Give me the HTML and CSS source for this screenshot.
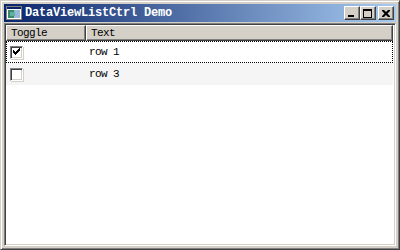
FILE: index.html
```html
<!DOCTYPE html>
<html lang="en">
<head>
  <meta charset="UTF-8">
  <title>DataViewListCtrl Demo</title>
  <link rel="stylesheet" href="styles.css">
</head>
<body>

  <!-- Frame -->
  <div class="window">
    <div class="titlebar">
      <div class="app-icon">
        <svg width="16" height="14" viewBox="0 0 16 14">
          <rect x="0.5" y="0.5" width="15" height="13" fill="#fff" stroke="#808080"/>
          <rect x="1" y="1" width="14" height="2" fill="#0a246a"/>
          <rect x="2" y="4" width="6" height="8" fill="#3a8a6a"/>
          <rect x="8" y="4" width="6" height="8" fill="#9ab8d8"/>
          <rect x="4" y="6" width="5" height="4" fill="#60b0a0"/>
        </svg>
      </div>
      <div class="title">DataViewListCtrl Demo</div>
      <div class="caption-buttons">
        <div class="cap-btn"><span class="min-glyph"></span></div>
        <div class="cap-btn"><span class="max-glyph"></span></div>
        <div class="cap-btn close">
          <svg width="8" height="7" viewBox="0 0 8 7">
            <path d="M0 0h2l2 2 2-2h2v1l-2.5 2.5L8 6v1H6L4 5 2 7H0V6l2.5-2.5L0 1z" fill="#000"/>
          </svg>
        </div>
      </div>
    </div>

    <!-- List control -->
    <div class="listctrl">
      <div class="header">
        <div class="col col-toggle">Toggle</div>
        <div class="col col-text">Text</div>
      </div>
      <div class="row focused">
        <div class="cell cell-toggle"><span class="check checked"></span></div>
        <div class="cell cell-text">row 1</div>
      </div>
      <div class="row alt">
        <div class="cell cell-toggle"><span class="check"></span></div>
        <div class="cell cell-text">row 3</div>
      </div>
    </div>
  </div>

</body>
</html>
```

FILE: styles.css
```css
* {
  margin: 0;
  padding: 0;
  box-sizing: border-box;
}

body {
  width: 400px;
  height: 250px;
  overflow: hidden;
  background-color: #d4d0c8;
  font-family: "Liberation Mono", "DejaVu Sans Mono", monospace;
}

/* Window frame */
.window {
  width: 400px;
  height: 250px;
  background-color: #d4d0c8;
  border-top: 1px solid #d4d0c8;
  border-left: 1px solid #d4d0c8;
  border-right: 1px solid #404040;
  border-bottom: 1px solid #404040;
  box-shadow: inset 1px 1px 0 #fff, inset -1px -1px 0 #808080;
  padding: 3px;
  display: flex;
  flex-direction: column;
}

/* Title bar */
.titlebar {
  height: 18px;
  display: flex;
  align-items: center;
  background: linear-gradient(to right, #0a246a, #a6caf0);
  padding: 0 2px;
  flex-shrink: 0;
}

.app-icon {
  width: 16px;
  height: 14px;
  margin-right: 3px;
  display: flex;
}

.title {
  color: #fff;
  font-weight: bold;
  font-size: 12px;
  letter-spacing: -0.2px;
  flex: 1;
  white-space: nowrap;
}

.caption-buttons {
  display: flex;
  align-items: center;
}

.cap-btn {
  width: 16px;
  height: 14px;
  background-color: #d4d0c8;
  border-top: 1px solid #fff;
  border-left: 1px solid #fff;
  border-right: 1px solid #404040;
  border-bottom: 1px solid #404040;
  box-shadow: inset -1px -1px 0 #808080;
  display: flex;
  align-items: center;
  justify-content: center;
}

.cap-btn.close {
  margin-left: 2px;
}

.min-glyph {
  width: 6px;
  height: 2px;
  background-color: #000;
  margin-top: 6px;
  margin-right: 2px;
}

.max-glyph {
  width: 9px;
  height: 9px;
  border: 1px solid #000;
  border-top-width: 2px;
  margin-right: 1px;
}

/* List control */
.listctrl {
  flex: 1;
  margin-top: 1px;
  background-color: #fff;
  border-top: 1px solid #808080;
  border-left: 1px solid #808080;
  border-right: 1px solid #fff;
  border-bottom: 1px solid #fff;
  box-shadow: inset 1px 1px 0 #404040, inset -1px -1px 0 #d4d0c8;
  padding: 1px 2px 2px 1px;
  font-size: 11px;
  letter-spacing: -0.6px;
  color: #000;
}

.header {
  display: flex;
  height: 16px;
}

.col {
  height: 16px;
  background-color: #d4d0c8;
  border-top: 1px solid #fff;
  border-left: 1px solid #fff;
  border-right: 1px solid #404040;
  border-bottom: 1px solid #404040;
  box-shadow: inset -1px -1px 0 #808080;
  padding-left: 4px;
  line-height: 14px;
}

.col-toggle {
  width: 80px;
}

.col-text {
  flex: 1;
}

.row {
  display: flex;
  height: 22px;
  align-items: center;
}

.row.focused {
  border: 1px dotted #000;
}

.row.alt {
  background-color: #f5f5f5;
}

.cell-toggle {
  width: 80px;
  padding-left: 3px;
  display: flex;
}

.row.alt .cell-toggle {
  padding-left: 4px;
}

.cell-text {
  padding-left: 2px;
}

.row.alt .cell-text {
  padding-left: 3px;
}

.check {
  width: 13px;
  height: 13px;
  background-color: #fff;
  border-top: 1px solid #808080;
  border-left: 1px solid #808080;
  border-right: 1px solid #fff;
  border-bottom: 1px solid #fff;
  box-shadow: inset 1px 1px 0 #404040, inset -1px -1px 0 #d4d0c8, 1px 1px 0 #d4d0c8;
  position: relative;
}

.check.checked::after {
  content: "";
  position: absolute;
  left: 2px;
  top: 1px;
  width: 7px;
  height: 7px;
  background: url("data:image/svg+xml;utf8,<svg xmlns='http://www.w3.org/2000/svg' width='7' height='7'><path d='M0 2h1v1h1v1h1V3h1V2h1V1h1V0h1v3H6v1H5v1H4v1H3v1H2V6H1V5H0z' fill='black'/></svg>") no-repeat;
}
```
